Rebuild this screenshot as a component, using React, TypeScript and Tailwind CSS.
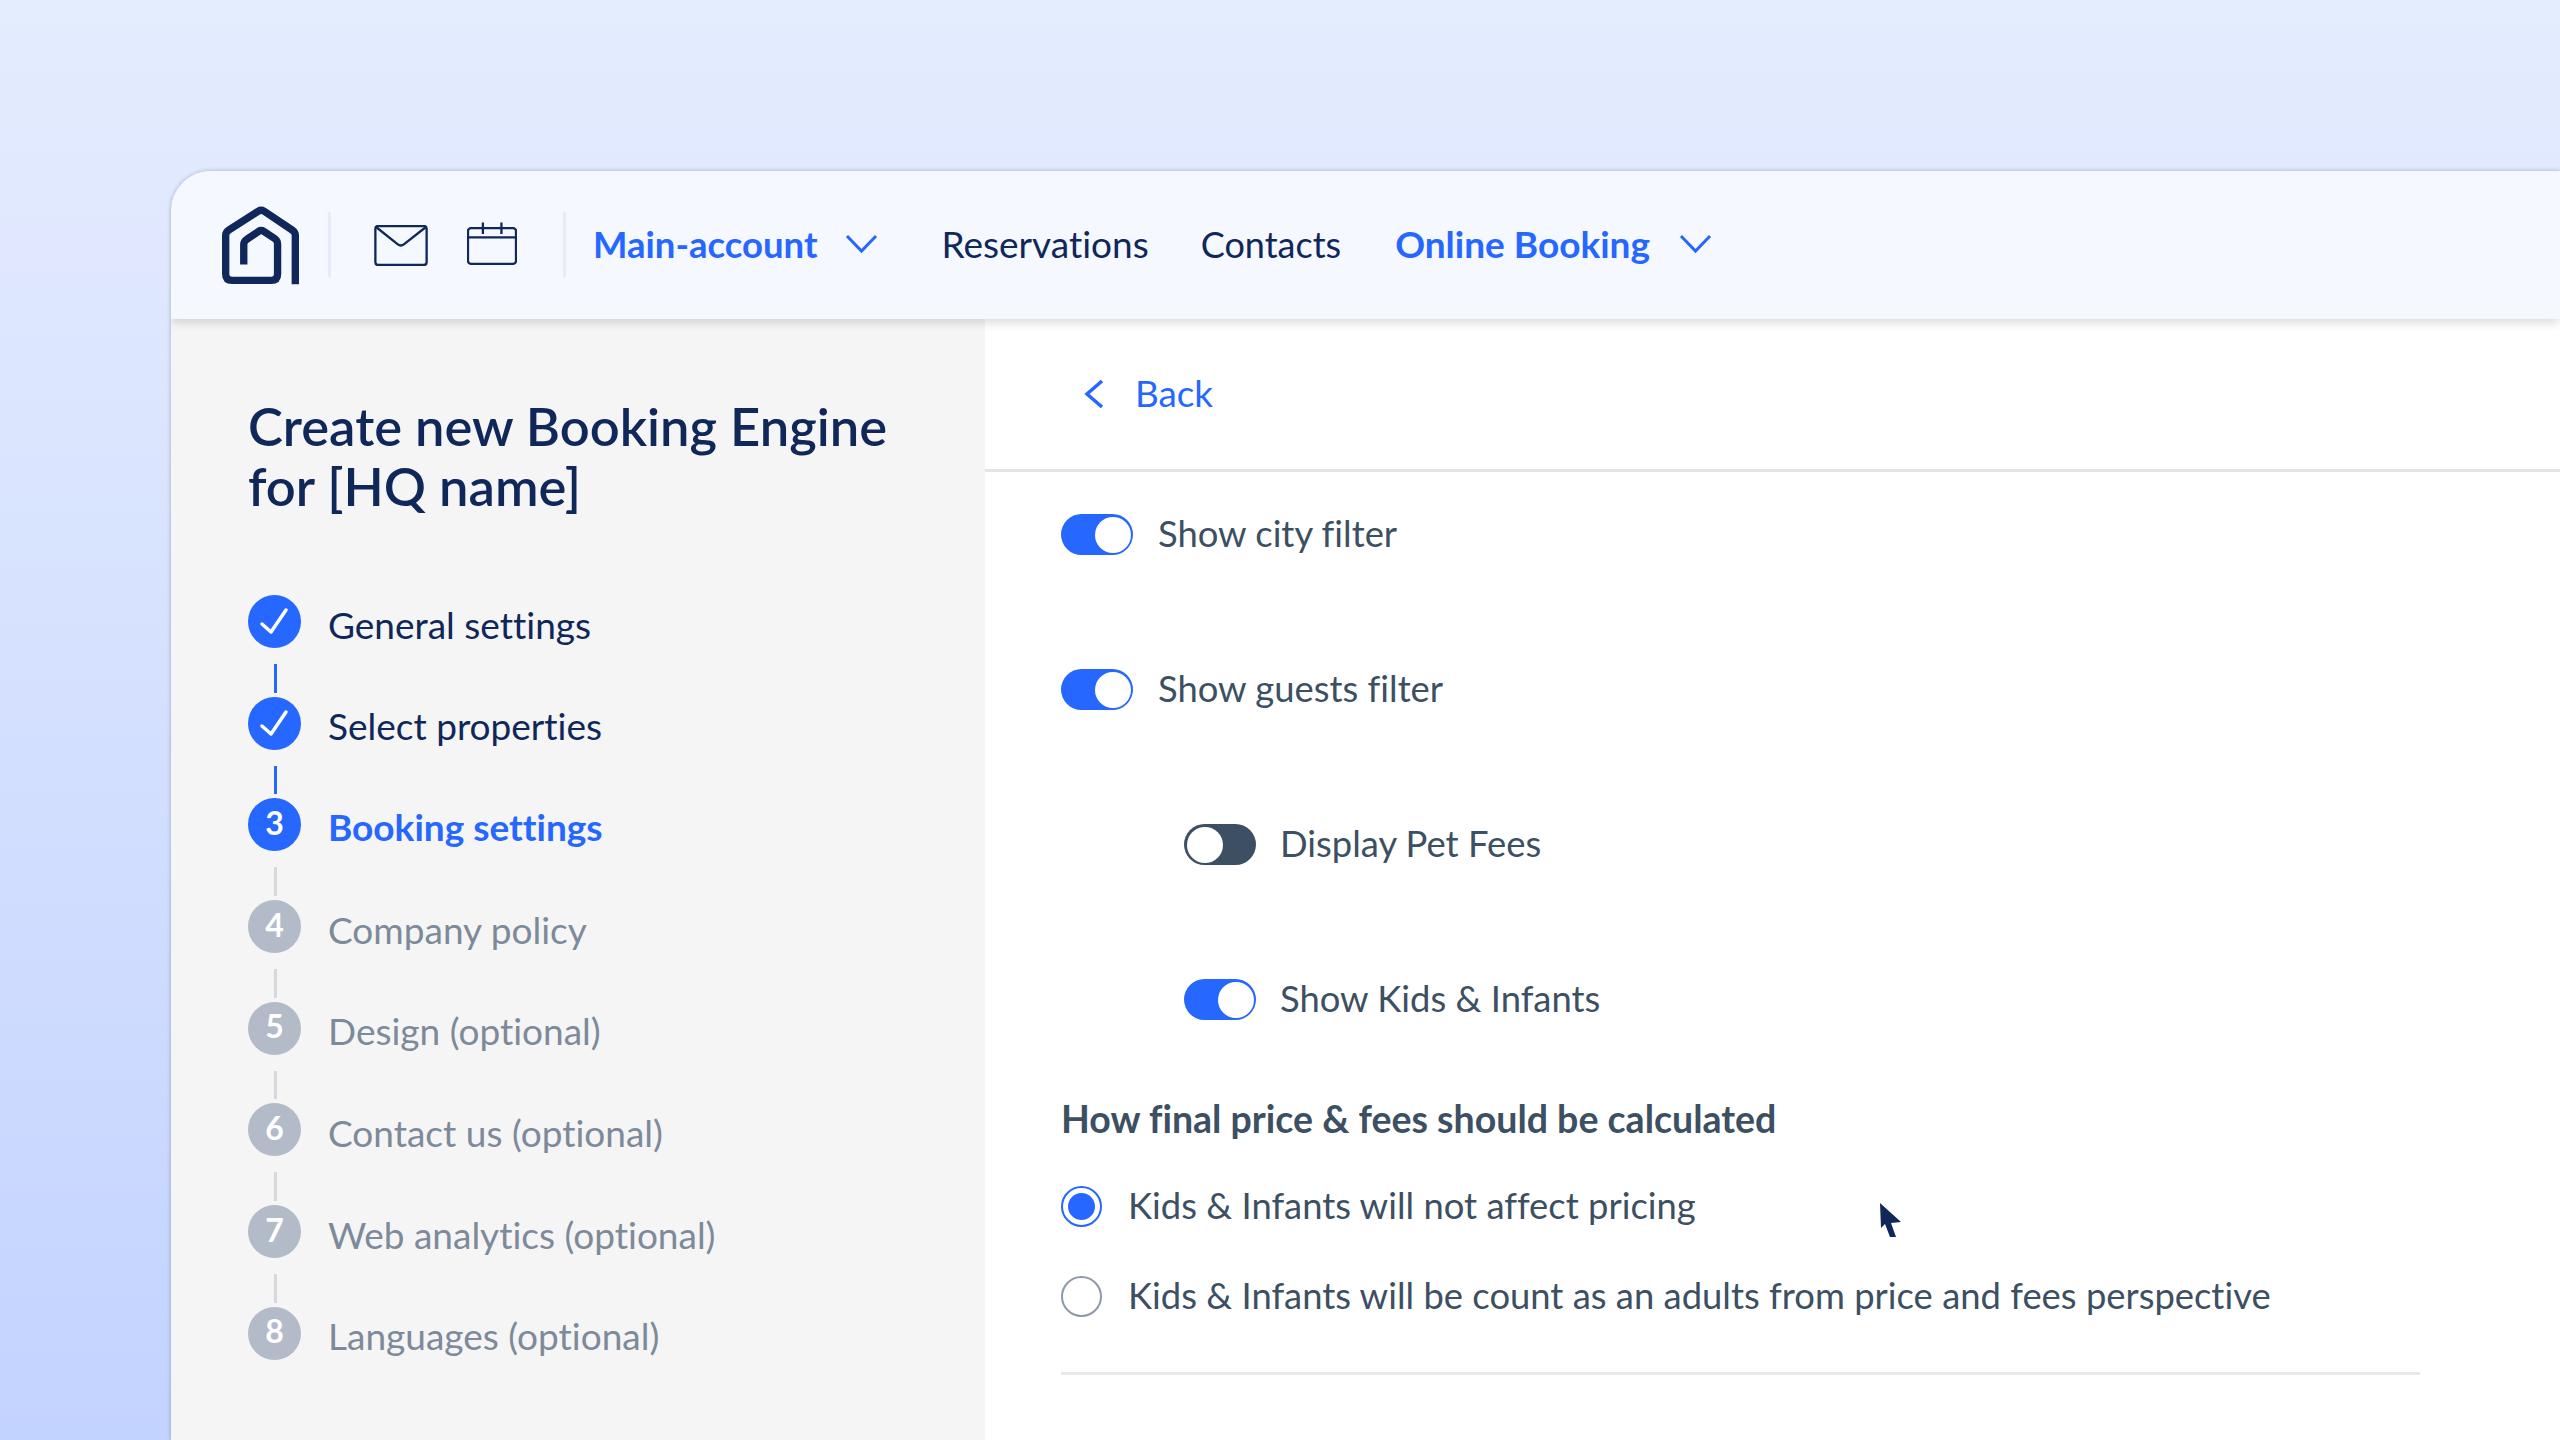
const steps = [
  { label: "General settings", state: "done" },
  { label: "Select properties", state: "done" },
  { label: "Booking settings", state: "active", n: 3 },
  { label: "Company policy", state: "todo", n: 4 },
  { label: "Design (optional)", state: "todo", n: 5 },
  { label: "Contact us (optional)", state: "todo", n: 6 },
  { label: "Web analytics (optional)", state: "todo", n: 7 },
  { label: "Languages (optional)", state: "todo", n: 8 },
];

function Logo() {
  return (
    <svg viewBox="62 47 236 236" className="h-[79px] w-[79px] shrink-0" fill="none" stroke="#10275a" strokeWidth="22" strokeLinejoin="round">
      <path d="M284 281V135Q284 125 275 119L190 62Q182 57 174 62L85 119Q76 125 76 135V250Q76 269 95 269H212Q231 269 231 250V160Q231 150 222 144L190 123Q182 118 174 123L140 146Q130 152 130 162V222" />
    </svg>
  );
}

function MailIcon() {
  return (
    <svg viewBox="520 102 161 124" className="h-[41px] w-[54px]" fill="none" stroke="#10275a" strokeWidth="7">
      <rect x="523" y="105" width="155" height="118" rx="8" />
      <path d="M525 108L590 160Q600 168 610 160L676 108" />
    </svg>
  );
}

function CalendarIcon() {
  return (
    <svg viewBox="799 92 151 129" className="mb-[3px] h-[43px] w-[50px]" fill="none" stroke="#10275a" strokeWidth="7">
      <rect x="802" y="110" width="145" height="108" rx="9" />
      <path d="M802 138H947M847 93V128M903 93V128" />
    </svg>
  );
}

function Chevron() {
  return (
    <svg viewBox="0 0 33 20" className="h-[20px] w-[33px]" fill="none" stroke="currentColor" strokeWidth="3">
      <path d="M2 2L16.500 17L31 2" />
    </svg>
  );
}

function Toggle({ label, on, indent }: { label: string; on: boolean; indent?: boolean }) {
  return (
    <div className={indent ? "flex items-center gap-[24px] pl-[123px]" : "flex items-center gap-[25px]"}>
      <div className={on ? "flex h-[41px] w-[72px] items-center justify-end rounded-full bg-[#2667ff] p-[2.500px]" : "flex h-[41px] w-[72px] items-center justify-start rounded-full bg-[#3d4f63] p-[2.500px]"}>
        <div className="h-[36px] w-[36px] rounded-full bg-white" />
      </div>
      <span className="pb-[2px] text-[36.400px] leading-[39px] text-[#3d4f63]">{label}</span>
    </div>
  );
}

function Radio({ label, on }: { label: string; on?: boolean }) {
  return (
    <div className="flex items-center gap-[26px]">
      {on ? (
        <div className="flex h-[41px] w-[41px] items-center justify-center rounded-full border-2 border-[#2667ff]">
          <div className="h-[27px] w-[27px] rounded-full bg-[#2667ff]" />
        </div>
      ) : (
        <div className="h-[41px] w-[41px] rounded-full border-2 border-[#8d99a8]" />
      )}
      <span className="pb-[2px] text-[36.400px] leading-[39px] text-[#3d4f63]">{label}</span>
    </div>
  );
}

export default function App() {
  return (
    <div className="h-[1440px] w-[2560px] overflow-hidden bg-gradient-to-b from-[#e4ecfe] via-[#dbe5fe] via-30% to-[#c3d3ff] pl-[171px] pt-[171px] font-['Lato',sans-serif] [font-variant-ligatures:none]">
      <div className="relative flex h-[1269px] flex-col overflow-hidden rounded-tl-[40px] bg-white shadow-[0_0_4px_rgba(16,39,90,0.3)]">
        {/* header */}
        <header className="relative z-10 flex h-[148px] shrink-0 items-center bg-[#f5f8ff] pl-[50px] shadow-[0_3px_10px_rgba(0,0,0,0.16)]">
          <Logo />
          <div className="ml-[28px] h-[66px] w-[3px] rounded bg-[#e4ebfc]" />
          <div className="ml-[43px] flex items-center gap-[39px]">
            <MailIcon />
            <CalendarIcon />
          </div>
          <div className="ml-[46px] h-[66px] w-[3px] rounded bg-[#e4ebfc]" />
          <nav className="ml-[27px] flex items-center pb-[2px] text-[36.500px] text-[#10275a]">
            <span className="font-bold text-[#2667ff]">Main-account</span>
            <span className="ml-[27px] text-[#2667ff]"><Chevron /></span>
            <span className="ml-[64px] text-[37px]">Reservations</span>
            <span className="ml-[52px] text-[36px]">Contacts</span>
            <span className="ml-[54px] text-[37px] font-bold text-[#2667ff]">Online Booking</span>
            <span className="ml-[29px] text-[#2667ff]"><Chevron /></span>
          </nav>
        </header>

        <div className="flex flex-1">
          {/* sidebar */}
          <aside className="w-[814px] shrink-0 bg-[#f5f5f5] pl-[77px] pt-[77px]">
            <h1 className="text-[52.500px] leading-[60px] font-semibold text-[#10275a]">
              Create new Booking Engine
              <br />
              for [HQ name]
            </h1>
            <div className="mt-[79px] flex flex-col">
              {steps.map((step, i) => (
                <div key={step.label} className="flex flex-col">
                  <div className="flex items-center gap-[27px]">
                    <div className={step.state === "todo" ? "flex h-[53px] w-[53px] items-center justify-center rounded-full bg-[#b3bbc8] text-white" : "flex h-[53px] w-[53px] items-center justify-center rounded-full bg-[#2667ff] text-white"}>
                      {step.state === "done" ? (
                        <svg viewBox="0 0 53 53" className="h-[53px] w-[53px]" fill="none" stroke="currentColor" strokeWidth="3.500" strokeLinecap="round" strokeLinejoin="round">
                          <path d="M14 29L23 37L38 15" />
                        </svg>
                      ) : (
                        <span className="-translate-y-[2px] text-[32px] leading-none font-bold">{step.n}</span>
                      )}
                    </div>
                    <span className={step.state === "done" ? "translate-y-[3px] text-[37px] leading-[40px] text-[#10275a]" : step.state === "active" ? "translate-y-[2px] text-[37px] leading-[40px] font-bold text-[#2667ff]" : "translate-y-[3px] text-[37px] leading-[40px] text-[#7d8a9a]"}>
                      {step.label}
                    </span>
                  </div>
                  {i < steps.length - 1 && (
                    <div className={step.state === "todo" || step.state === "active" ? "mb-[4px] ml-[26px] mt-[16px] h-[28.700px] w-[3px] bg-[#d5d9de]" : "mb-[4px] ml-[26px] mt-[16px] h-[28.700px] w-[3px] bg-[#2667ff]"} />
                  )}
                </div>
              ))}
            </div>
          </aside>

          {/* content */}
          <main className="relative flex-1">
            <div className="flex h-[153px] items-center gap-[30px] border-b-[3px] border-[#e4e4e4] pl-[98px] text-[#2667ff]">
              <svg viewBox="0 0 22 30" className="h-[30px] w-[22px]" fill="none" stroke="currentColor" strokeWidth="3.500">
                <path d="M19 2L4 15L19 28" />
              </svg>
              <span className="text-[36.800px]">Back</span>
            </div>
            <div className="pl-[76px] pr-[140px] pt-[42px]">
              <div className="flex flex-col gap-[114px]">
                <Toggle label="Show city filter" on />
                <Toggle label="Show guests filter" on />
                <Toggle label="Display Pet Fees" on={false} indent />
                <Toggle label="Show Kids & Infants" on indent />
              </div>
              <h2 className="mt-[77px] text-[37.500px] leading-[43px] font-bold text-[#3d4f63]">How final price &amp; fees should be calculated</h2>
              <div className="mt-[46px] flex flex-col gap-[49px]">
                <Radio label="Kids & Infants will not affect pricing" on />
                <Radio label="Kids & Infants will be count as an adults from price and fees perspective" />
              </div>
              <div className="mt-[55px] h-[3px] bg-[#e9e9e9]" />
            </div>
            {/* cursor */}
            <svg viewBox="0 0 22 35" className="absolute left-[895px] top-[884px] h-[35px] w-[22px]" fill="#10275a">
              <path d="M0 0L21 19L11 20L16 34L10 34L5 21L1 25Z" />
            </svg>
          </main>
        </div>
      </div>
    </div>
  );
}
